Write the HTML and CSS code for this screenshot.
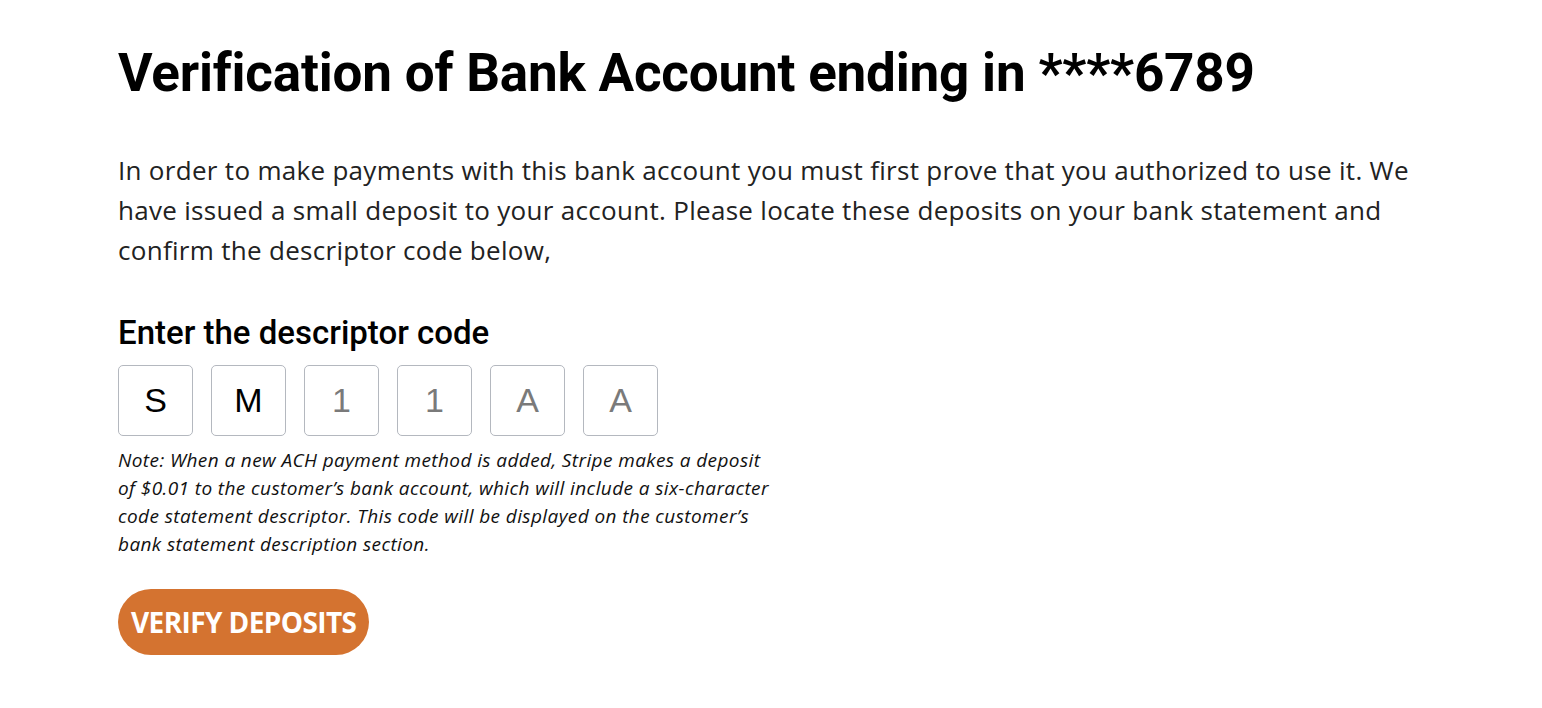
FILE: index.html
```html
<!DOCTYPE html>
<html lang="en">
<head>
  <meta charset="UTF-8">
  <title>Verify bank account</title>
  <link rel="stylesheet" href="styles.css">
</head>
<body>
<main class="verify">
  <h1 class="verify-title">Verification of Bank Account ending in ****6789</h1>

  <p class="verify-intro">
    In order to make payments with this bank account you must first prove that you authorized to use it. We
    have issued a small deposit to your account. Please locate these deposits on your bank statement and
    confirm the descriptor code below,
  </p>

  <h2 class="code-label">Enter the descriptor code</h2>
  <div class="code-boxes">
    <input class="code-box" type="text" maxlength="1" value="S">
    <input class="code-box" type="text" maxlength="1" value="M">
    <input class="code-box" type="text" maxlength="1" placeholder="1">
    <input class="code-box" type="text" maxlength="1" placeholder="1">
    <input class="code-box" type="text" maxlength="1" placeholder="A">
    <input class="code-box" type="text" maxlength="1" placeholder="A">
  </div>

  <p class="code-note">
    Note: When a new ACH payment method is added, Stripe makes a deposit
    of $0.01 to the customer’s bank account, which will include a six-character
    code statement descriptor. This code will be displayed on the customer’s
    bank statement description section.
  </p>

  <button class="verify-btn" type="button">VERIFY DEPOSITS</button>
</main>
</body>
</html>
```

FILE: styles.css
```css
body {
  margin: 0;
  background: #fff;
  color: #1a1a1a;
  font-family: "Open Sans", "Liberation Sans", sans-serif;
}

.verify {
  padding: 40px 0 0 118px;
}

.verify-title {
  margin: 0;
  font: 700 53px/66px Roboto, sans-serif;
  color: #000;
  letter-spacing: -.2px;
}

.verify-intro {
  margin: 44px 0 0;
  max-width: 1310px;
  font-size: 26px;
  line-height: 40px;
  letter-spacing: .3px;
  color: #222;
}

.code-label {
  margin: 43px 0 0;
  font: 500 33px/40px Roboto, sans-serif;
  color: #000;
}

.code-boxes {
  display: flex;
  gap: 18px;
  margin-top: 12px;
}

.code-box {
  width: 75px;
  height: 71px;
  box-sizing: border-box;
  padding: 0;
  border: 1.5px solid #b4b8bf;
  border-radius: 5px;
  text-align: center;
  font: 34px "Liberation Sans", Arial, sans-serif;
  color: #000;
  outline: none;
}

.code-box::placeholder {
  color: #7a7a7a;
  opacity: 1;
}

.code-note {
  margin: 10px 0 0;
  max-width: 655px;
  font-size: 19px;
  font-style: italic;
  line-height: 28px;
  letter-spacing: .4px;
  color: #111;
}

.verify-btn {
  margin-top: 31px;
  height: 66px;
  padding: 0 13px;
  border: 0;
  border-radius: 33px;
  background: #d47330;
  color: #fff;
  font: 700 28px "Open Sans", sans-serif;
  letter-spacing: -.6px;
  cursor: pointer;
}
```
